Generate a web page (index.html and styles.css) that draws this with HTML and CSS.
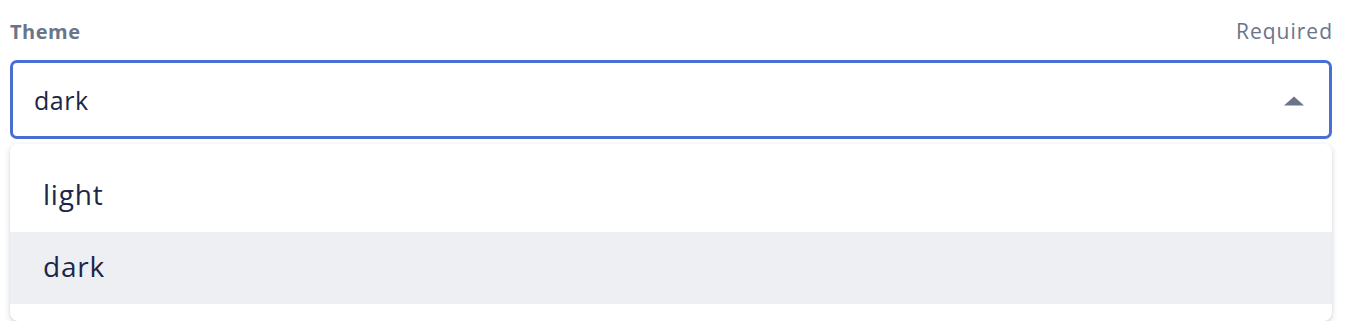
FILE: index.html
```html
<!DOCTYPE html>
<html lang="en">
<head>
<meta charset="utf-8">
<title>Theme select</title>
<link rel="stylesheet" href="styles.css">
</head>
<body>
<div class="field">
  <div class="field-header">
    <span class="field-label">Theme</span>
    <span class="field-hint">Required</span>
  </div>
  <div class="select-box">
    <span class="select-value">dark</span>
    <svg class="caret" width="20" height="10" viewBox="0 0 20 10" aria-hidden="true"><path d="M0 9.5 L10 0.5 L20 9.5 Z" fill="#6b7489"/></svg>
  </div>
  <ul class="menu">
    <li class="option">light</li>
    <li class="option is-active">dark</li>
  </ul>
</div>
</body>
</html>
```

FILE: styles.css
```css
html, body {
  margin: 0;
  padding: 0;
  background: #ffffff;
}

body {
  font-family: "Open Sans", "Noto Sans", sans-serif;
  color: #1b2649;
}

.field {
  padding: 17px 18px 0 10px;
}

.field-header {
  display: flex;
  justify-content: space-between;
  align-items: baseline;
  height: 28px;
  line-height: 28px;
  margin-bottom: 15px;
}

.field-label {
  font-size: 20px;
  font-weight: 700;
  letter-spacing: 0.5px;
  color: #6b7489;
}

.field-hint {
  font-size: 21px;
  font-weight: 400;
  letter-spacing: 1px;
  margin-right: -1px;
  color: #6b7489;
}

.select-box {
  box-sizing: border-box;
  height: 79px;
  border: 3px solid #4a6fd3;
  border-radius: 7px;
  display: flex;
  align-items: center;
  justify-content: space-between;
  padding: 0 25px 0 21px;
}

.select-value {
  font-size: 25px;
  letter-spacing: 0.5px;
  color: #1b2649;
}

.caret {
  display: block;
  margin-top: 2px;
}

.menu {
  margin: 5px 0 0;
  padding: 16px 0 17px;
  list-style: none;
  background: #ffffff;
  border-radius: 8px;
  box-shadow: 0 2px 6px rgba(40, 55, 90, 0.18), 0 1px 2px rgba(40, 55, 90, 0.10);
}

.option {
  box-sizing: border-box;
  height: 72px;
  line-height: 68px;
  padding: 0 33px 4px;
  font-size: 28px;
  letter-spacing: 0.8px;
  color: #1b2649;
}

.option.is-active {
  background: #eeeff3;
}
```
